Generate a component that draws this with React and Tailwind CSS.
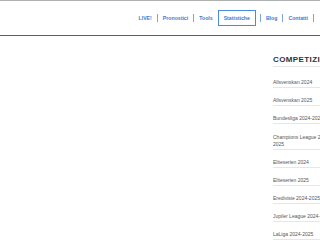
import React from 'react';

const links = ['LIVE!', 'Pronostici', 'Tools'];
const competizioni = [
    'Allsvenskan 2024',
    'Allsvenskan 2025',
    'Bundesliga 2024-2025',
    'Champions League 2024-|2025',
    'Eliteserien 2024',
    'Eliteserien 2025',
    'Eredivisie 2024-2025',
    'Jupiler League 2024-2025',
    'LaLiga 2024-2025',
];

function Sep() {
    return <span className="block w-px h-[8px] bg-[#7aa8e0]" />;
}

export default function App() {
    return (
        <div className="w-[320px] h-[240px] overflow-hidden bg-white font-['Liberation_Sans',Arial,sans-serif]">
            {/* Header */}
            <div className="h-[36px] border-t border-b border-t-[#b0b0b0] border-b-[#5f5f5f] flex items-center justify-end pr-[6px]">
                <nav className="flex items-center text-[5.2px] font-bold text-[#3c7bd0] leading-[6px]">
                    {links.map((l) => (
                        <React.Fragment key={l}>
                            <span className="px-[5px]">{l}</span>
                            {l !== 'Tools' && <Sep />}
                        </React.Fragment>
                    ))}
                    <span className="px-[5px] py-[4px] border border-[#4a8ae0]">Statistiche</span>
                    <span className="ml-[4px]"><Sep /></span>
                    <span className="px-[5px]">Blog</span>
                    <Sep />
                    <span className="px-[5px]">Contatti</span>
                    <Sep />
                </nav>
            </div>

            {/* Body */}
            <div className="flex">
                <div className="w-[273px] shrink-0" />
                <aside className="w-[70px] shrink-0">
                    <h3 className="pt-[19px] pb-[1px] text-[8px] leading-[10px] font-bold tracking-[0.4px] text-[#333] border-b border-[#e6e6e6] whitespace-nowrap">
                        COMPETIZIONI
                    </h3>
                    <ul className="mt-[3px]">
                        {competizioni.map((c) => (
                            <li key={c} className={`${c.includes('|') ? 'pt-[10px]' : 'pt-[9px]'} pb-[1px] border-b border-[#e6e6e6] text-[5px] leading-[7px] text-[#555] whitespace-nowrap`}>
                                {c.split('|').map((part, i) => (
                                    <div key={i}>{part}</div>
                                ))}
                            </li>
                        ))}
                    </ul>
                </aside>
            </div>
        </div>
    );
}
